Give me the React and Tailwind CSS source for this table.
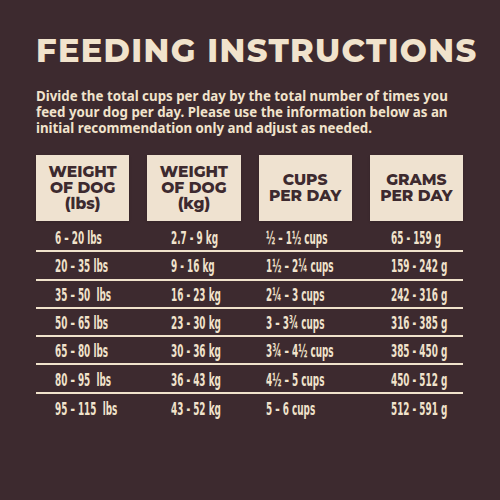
import React from "react";

const rows = [
  ["6 – 20 lbs", "2.7 - 9 kg", "½ – 1½ cups", "65 - 159 g"],
  ["20 – 35 lbs", "9 - 16 kg", "1½ – 2¼ cups", "159 - 242 g"],
  ["35 – 50  lbs", "16 - 23 kg", "2¼ – 3 cups", "242 - 316 g"],
  ["50 – 65 lbs", "23 - 30 kg", "3 – 3¾ cups", "316 - 385 g"],
  ["65 – 80 lbs", "30 - 36 kg", "3¾ – 4½ cups", "385 - 450 g"],
  ["80 – 95  lbs", "36 - 43 kg", "4½ – 5 cups", "450 - 512 g"],
  ["95 – 115  lbs", "43 - 52 kg", "5 – 6 cups", "512 - 591 g"],
];

const headers = [
  ["WEIGHT", "OF DOG", "(lbs)"],
  ["WEIGHT", "OF DOG", "(kg)"],
  ["CUPS", "PER DAY"],
  ["GRAMS", "PER DAY"],
];

const pads = ["pl-[19px]", "pl-[24px]", "pl-[7px]", "pl-[21px]"];

const App = () => {
  return (
    <div className="w-[500px] h-[500px] bg-[#3d2a2f] px-[36px] pt-[33px] text-[#f1e3cc] overflow-hidden">
      <h1 className="font-['Montserrat','Noto_Sans',sans-serif] font-extrabold text-[32px] leading-[36px] tracking-[0.042em] whitespace-nowrap">
        FEEDING INSTRUCTIONS
      </h1>
      <p className="mt-[19px] font-['Noto_Sans',sans-serif] font-bold text-[13.3px] leading-[16px] whitespace-nowrap">
        Divide the total cups per day by the total number of times you
        <br />
        feed your dog per day. Please use the information below as an
        <br />
        initial recommendation only and adjust as needed.
      </p>
      <div className="mt-[19px] w-[427px]">
        <div className="grid grid-cols-4 gap-x-[18px]">
          {headers.map((h, i) => (
            <div
              key={i}
              className="h-[66px] bg-[#efe2d0] text-[#3d2a2f] flex flex-col items-center justify-center font-['Montserrat','Noto_Sans',sans-serif] font-extrabold text-[15.5px] leading-[16px] shadow-sm"
            >
              {h.map((line, j) => (
                <span key={j}>{line}</span>
              ))}
            </div>
          ))}
        </div>
        <div className="mt-[3px]">
          {rows.map((r, i) => (
            <div
              key={i}
              className={`grid grid-cols-4 gap-x-[18px] h-[28.3px] items-center ${
                i < rows.length - 1 ? "border-b-2 border-[#f1e3cc]" : ""
              }`}
            >
              {r.map((cell, j) => (
                <div key={j} className={pads[j]}>
                  <span className="inline-block origin-left scale-x-[0.58] translate-y-[1px] whitespace-pre font-['DejaVu_Sans_Condensed','DejaVu_Sans',sans-serif] [font-stretch:condensed] font-bold text-[17px] leading-[20px]">
                    {cell}
                  </span>
                </div>
              ))}
            </div>
          ))}
        </div>
      </div>
    </div>
  );
};

export default App;
